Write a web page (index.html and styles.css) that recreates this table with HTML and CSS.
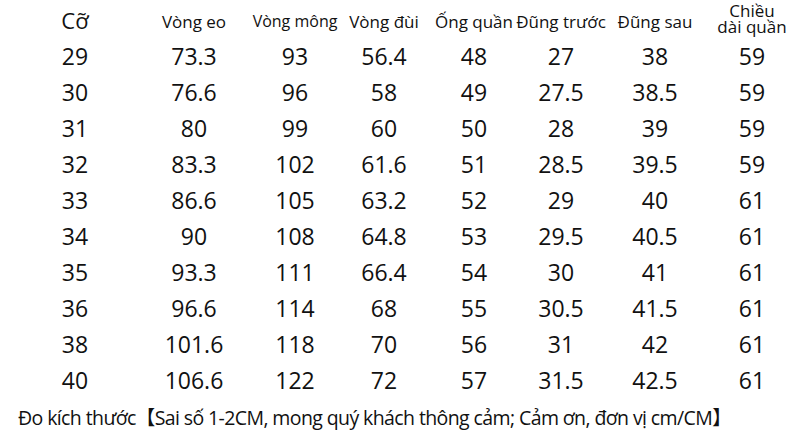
FILE: index.html
```html
<!DOCTYPE html>
<html lang="vi">
<head>
<meta charset="utf-8">
<link rel="stylesheet" href="styles.css">
</head>
<body>
<div class="chart">
  <div class="cell head size">Cỡ</div>
  <div class="cell head">Vòng eo</div>
  <div class="cell head small">Vòng mông</div>
  <div class="cell head">Vòng đùi</div>
  <div class="cell head">Ống quần</div>
  <div class="cell head">Đũng trước</div>
  <div class="cell head">Đũng sau</div>
  <div class="cell head last"><div class="two"><span class="line">Chiều</span><span class="line">dài quần</span></div></div>

  <div class="cell">29</div><div class="cell">73.3</div><div class="cell">93</div><div class="cell">56.4</div><div class="cell">48</div><div class="cell">27</div><div class="cell">38</div><div class="cell last">59</div>
  <div class="cell">30</div><div class="cell">76.6</div><div class="cell">96</div><div class="cell">58</div><div class="cell">49</div><div class="cell">27.5</div><div class="cell">38.5</div><div class="cell last">59</div>
  <div class="cell">31</div><div class="cell">80</div><div class="cell">99</div><div class="cell">60</div><div class="cell">50</div><div class="cell">28</div><div class="cell">39</div><div class="cell last">59</div>
  <div class="cell">32</div><div class="cell">83.3</div><div class="cell">102</div><div class="cell">61.6</div><div class="cell">51</div><div class="cell">28.5</div><div class="cell">39.5</div><div class="cell last">59</div>
  <div class="cell">33</div><div class="cell">86.6</div><div class="cell">105</div><div class="cell">63.2</div><div class="cell">52</div><div class="cell">29</div><div class="cell">40</div><div class="cell last">61</div>
  <div class="cell">34</div><div class="cell">90</div><div class="cell">108</div><div class="cell">64.8</div><div class="cell">53</div><div class="cell">29.5</div><div class="cell">40.5</div><div class="cell last">61</div>
  <div class="cell">35</div><div class="cell">93.3</div><div class="cell">111</div><div class="cell">66.4</div><div class="cell">54</div><div class="cell">30</div><div class="cell">41</div><div class="cell last">61</div>
  <div class="cell">36</div><div class="cell">96.6</div><div class="cell">114</div><div class="cell">68</div><div class="cell">55</div><div class="cell">30.5</div><div class="cell">41.5</div><div class="cell last">61</div>
  <div class="cell">38</div><div class="cell">101.6</div><div class="cell">118</div><div class="cell">70</div><div class="cell">56</div><div class="cell">31</div><div class="cell">42</div><div class="cell last">61</div>
  <div class="cell">40</div><div class="cell">106.6</div><div class="cell">122</div><div class="cell">72</div><div class="cell">57</div><div class="cell">31.5</div><div class="cell">42.5</div><div class="cell last">61</div>
</div>
<p class="note">Đo kích thước【Sai số 1-2CM, mong quý khách thông cảm; Cảm ơn, đơn vị cm/CM】</p>
</body>
</html>
```

FILE: styles.css
```css
html, body {
  margin: 0;
  padding: 0;
  background: #ffffff;
  overflow: hidden;
}

body {
  width: 790px;
  height: 441px;
  color: #111111;
  font-family: "Open Sans", "Noto Sans", "Noto Sans CJK SC", sans-serif;
}

.chart {
  margin-left: 16px;
  display: grid;
  grid-template-columns: 118px 120px 82px 96px 84px 90px 98px 86px;
  grid-template-rows: 38px repeat(10, 36px);
}

.cell {
  display: flex;
  align-items: center;
  justify-content: center;
  white-space: nowrap;
  font-size: 23px;
  line-height: 1;
}

.cell.last {
  padding-left: 10px;
}

.head {
  font-size: 17px;
  padding-top: 4px;
}

.head.size {
  font-size: 22px;
  padding-top: 2px;
}

.head.small {
  font-size: 16px;
}

.head.last {
  padding-top: 0;
  align-items: flex-start;
}

.two {
  display: flex;
  flex-direction: column;
  align-items: center;
  padding-top: 3px;
}

.line {
  display: block;
  font-size: 17px;
  line-height: 16px;
  height: 16px;
}

.note {
  margin: 0 0 0 18px;
  height: 36px;
  display: flex;
  align-items: center;
  font-size: 19.5px;
  letter-spacing: -0.6px;
  white-space: nowrap;
}
```
